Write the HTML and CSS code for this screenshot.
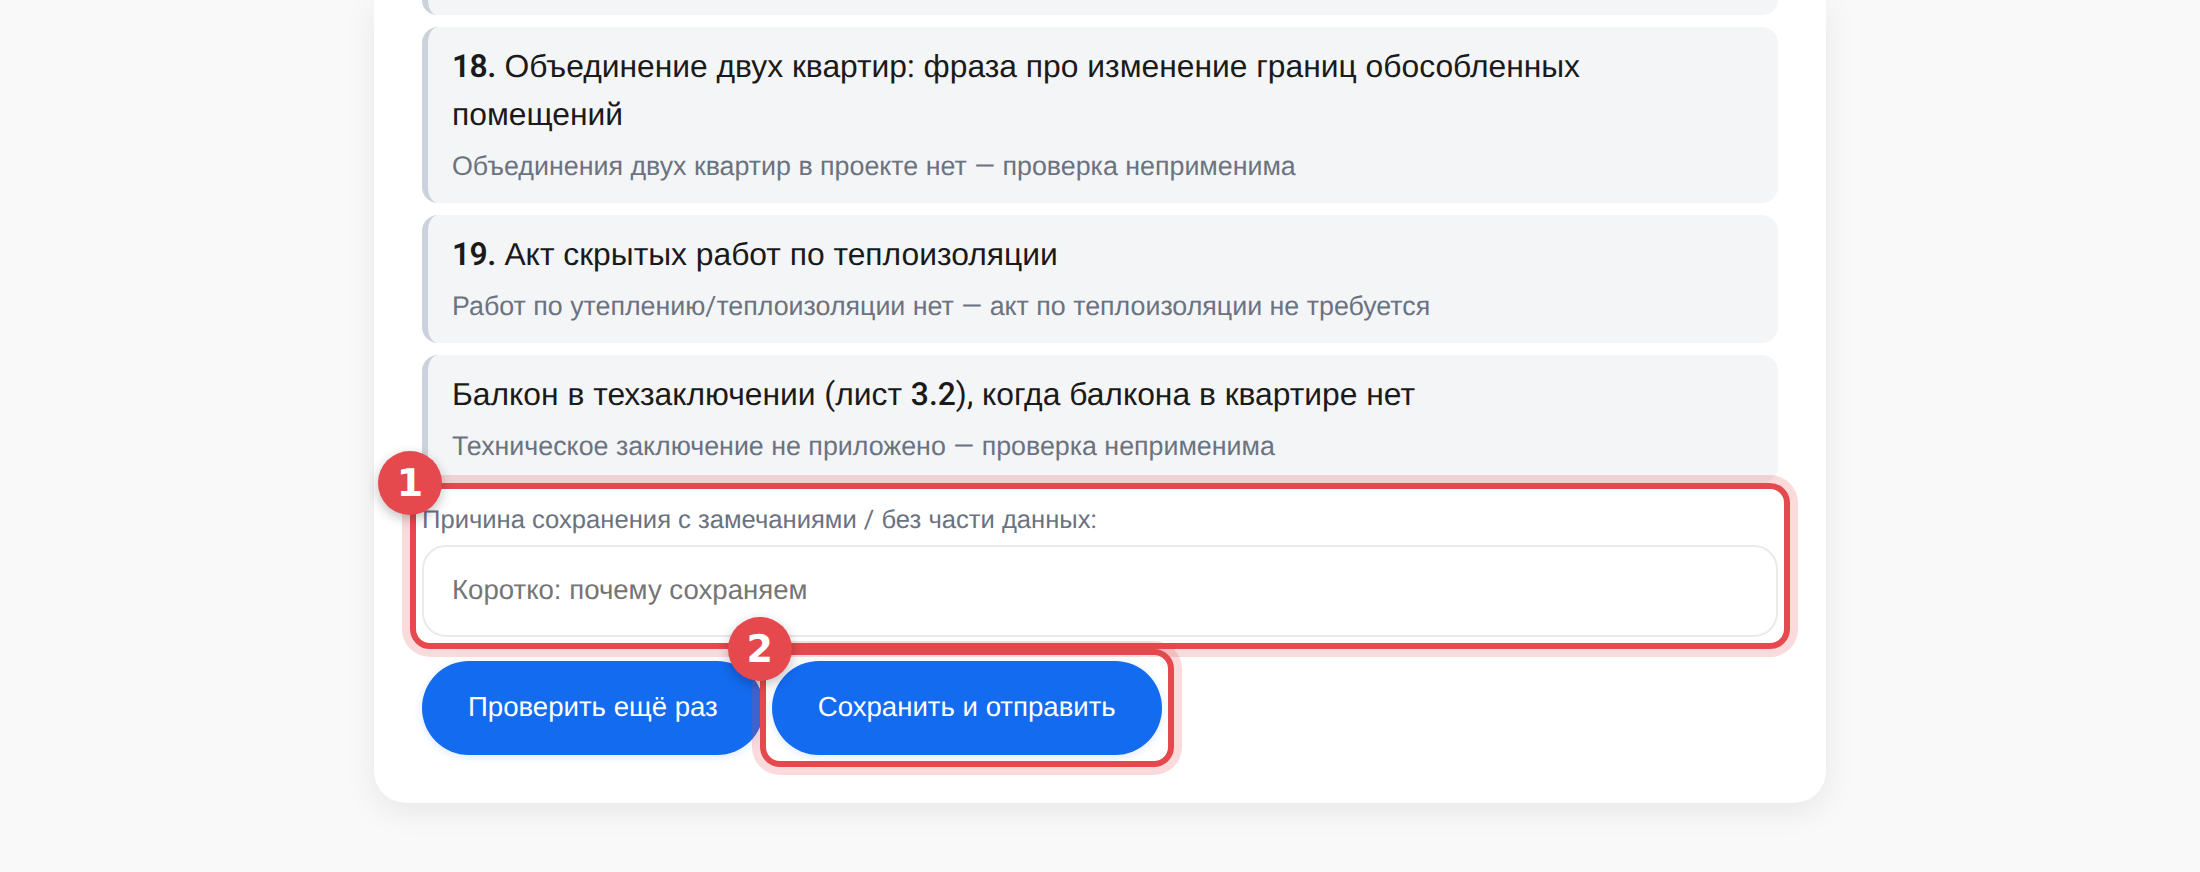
FILE: index.html
```html
<!DOCTYPE html>
<html lang="ru">
<head>
  <meta charset="UTF-8">
  <title>Проверка</title>
  <link rel="stylesheet" href="styles.css">
</head>
<body>
  <div class="card">
    <div class="check check-cut"></div>
    <div class="check">
      <div class="check-title"><span class="r num">18.</span> Объединение двух квартир<span class="r">:</span> фраза про изменение границ обособленных помещений</div>
      <div class="check-note">Объединения двух квартир в проекте нет <span class="r">—</span> проверка неприменима</div>
    </div>
    <div class="check">
      <div class="check-title"><span class="r num">19.</span> Акт скрытых работ по теплоизоляции</div>
      <div class="check-note">Работ по утеплению<span class="r">/</span>теплоизоляции нет <span class="r">—</span> акт по теплоизоляции не требуется</div>
    </div>
    <div class="check">
      <div class="check-title">Балкон в техзаключении <span class="r">(</span>лист <span class="r mid">3.2</span><span class="r">),</span> когда балкона в квартире нет</div>
      <div class="check-note">Техническое заключение не приложено <span class="r">—</span> проверка неприменима</div>
    </div>
    <div class="reason">
      <label class="reason-label" for="reason">Причина сохранения с замечаниями <span class="r">/</span> без части данных<span class="r">:</span></label>
      <input class="reason-input" id="reason" type="text" placeholder="Коротко: почему сохраняем">
      <span class="mark"><span class="mark-num">1</span></span>
    </div>
    <div class="actions">
      <button class="btn">Проверить ещё раз</button>
      <button class="btn btn-marked">Сохранить и отправить<span class="mark"><span class="mark-num">2</span></span></button>
    </div>
  </div>
</body>
</html>
```
FILE: styles.css
```css
html, body {
  margin: 0;
  height: 872px;
  overflow: hidden;
}
body {
  background-color: #f9f9f9;
  font-family: "Liberation Sans", Arial, sans-serif;
  color: #1a1a1a;
  text-rendering: geometricPrecision;
}
.card {
  box-sizing: border-box;
  width: 1452px;
  height: 803px;
  margin: 0 auto;
  padding: 0 48px 48px;
  background-color: #fff;
  border-radius: 0 0 32px 32px;
  box-shadow: 0 8px 32px rgba(0, 0, 0, 0.08);
}
.check {
  box-sizing: border-box;
  margin-bottom: 12px;
  padding: 15px 24px 17px;
  background-color: #f4f5f7;
  border-left: 6px solid #cbd2dc;
  border-radius: 16px;
}
.check-cut {
  height: 15px;
  padding: 0;
  border-radius: 0 0 16px 16px;
}
.check-title {
  font-size: 31.8px;
  line-height: 48px;
}
/* цифры и знаки в Roboto */
.r {
  font-family: Roboto, sans-serif;
}
.num {
  font-weight: 600;
  letter-spacing: -0.6px;
}
.mid {
  font-weight: 500;
}
.check-note {
  margin-top: 8px;
  font-size: 26.8px;
  line-height: 40px;
  color: #6b7280;
}
.reason {
  position: relative;
  padding-top: 19px;
  margin-top: -12px;
}
.reason::after {
  content: "";
  position: absolute;
  top: 0;
  left: -12px;
  right: -12px;
  bottom: -12px;
  border: 6px solid #e5484d;
  border-radius: 20px;
  box-shadow: 0 0 0 8px rgba(229, 72, 77, 0.2);
  pointer-events: none;
}
.reason-label {
  display: block;
  font-size: 25.6px;
  line-height: 36px;
  color: #6b7280;
  margin-bottom: 7px;
}
.reason-input {
  box-sizing: border-box;
  display: block;
  width: 100%;
  height: 92px;
  padding: 0 28px 2px;
  font-family: inherit;
  font-size: 27.6px;
  text-rendering: geometricPrecision;
  background-color: #fff;
  border: 2px solid #eaeaea;
  border-radius: 24px;
}
.actions {
  display: flex;
  gap: 8px;
  margin-top: 24px;
}
.btn {
  position: relative;
  height: 94px;
  padding: 0 46px 2px;
  font-family: inherit;
  font-size: 27.6px;
  text-rendering: geometricPrecision;
  color: #fff;
  background-color: #136bf0;
  border: 0;
  border-radius: 47px;
  box-shadow: 0 2px 8px rgba(19, 107, 240, 0.15);
}
.btn-marked::after {
  content: "";
  position: absolute;
  top: -12px;
  left: -12px;
  right: -12px;
  bottom: -12px;
  border: 6px solid #e5484d;
  border-radius: 20px;
  box-shadow: 0 0 0 8px rgba(229, 72, 77, 0.2);
}
.mark {
  position: absolute;
  z-index: 2;
  top: -32px;
  left: -44px;
  width: 64px;
  height: 64px;
  display: flex;
  align-items: center;
  justify-content: center;
  border-radius: 50%;
  background-color: #e5484d;
  box-shadow: 0 4px 12px rgba(0, 0, 0, 0.25);
}
.btn-marked .mark {
  top: -44px;
}
.mark-num {
  font-family: "DejaVu Sans", sans-serif;
  font-weight: 700;
  font-size: 38px;
  color: #fff;
}
```
